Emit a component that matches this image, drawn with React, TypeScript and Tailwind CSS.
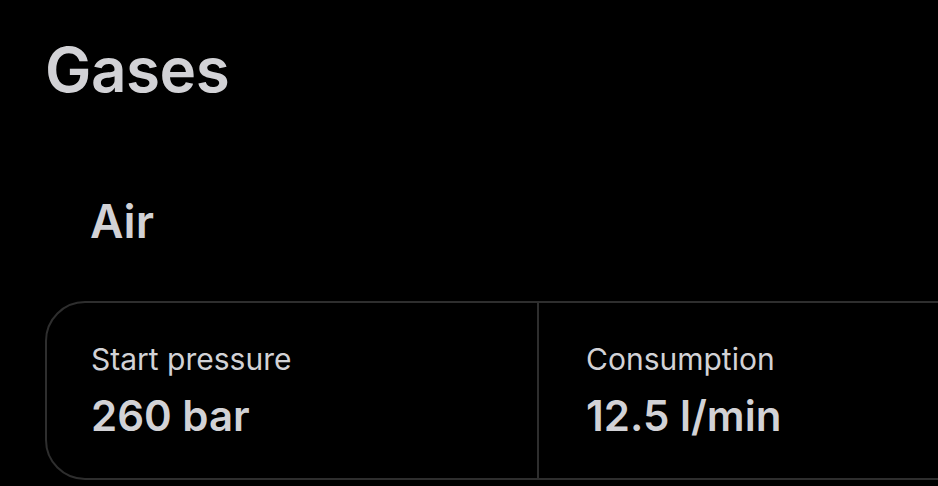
import React from "react";

export default function App() {
  return (
    <div
      className="w-[938px] h-[486px] overflow-hidden bg-black text-[#d2d2d6]"
      style={{ fontFamily: "Inter, 'Open Sans', sans-serif" }}
    >
      <div className="pl-[45px] pt-[36px]">
        <h1 className="text-[62px] leading-[68px] font-semibold tracking-[-0.5px]">Gases</h1>
        <h2 className="mt-[91px] pl-[45px] text-[46px] leading-[52px] font-semibold">Air</h2>
        <div className="mt-[54px] w-[988px] h-[179px] rounded-[40px] border-2 border-[#2e2e2e] grid grid-cols-2">
          <div className="border-r-2 border-[#2e2e2e] pl-[44px] pt-[38px]">
            <div className="text-[30px] leading-[36px] font-normal">Start pressure</div>
            <div className="mt-[16px] text-[42px] leading-[46px] font-semibold">260 bar</div>
          </div>
          <div className="pl-[47px] pt-[38px]">
            <div className="text-[30px] leading-[36px] font-normal">Consumption</div>
            <div className="mt-[16px] text-[42px] leading-[46px] font-semibold">12.5 l/min</div>
          </div>
        </div>
      </div>
    </div>
  );
}
